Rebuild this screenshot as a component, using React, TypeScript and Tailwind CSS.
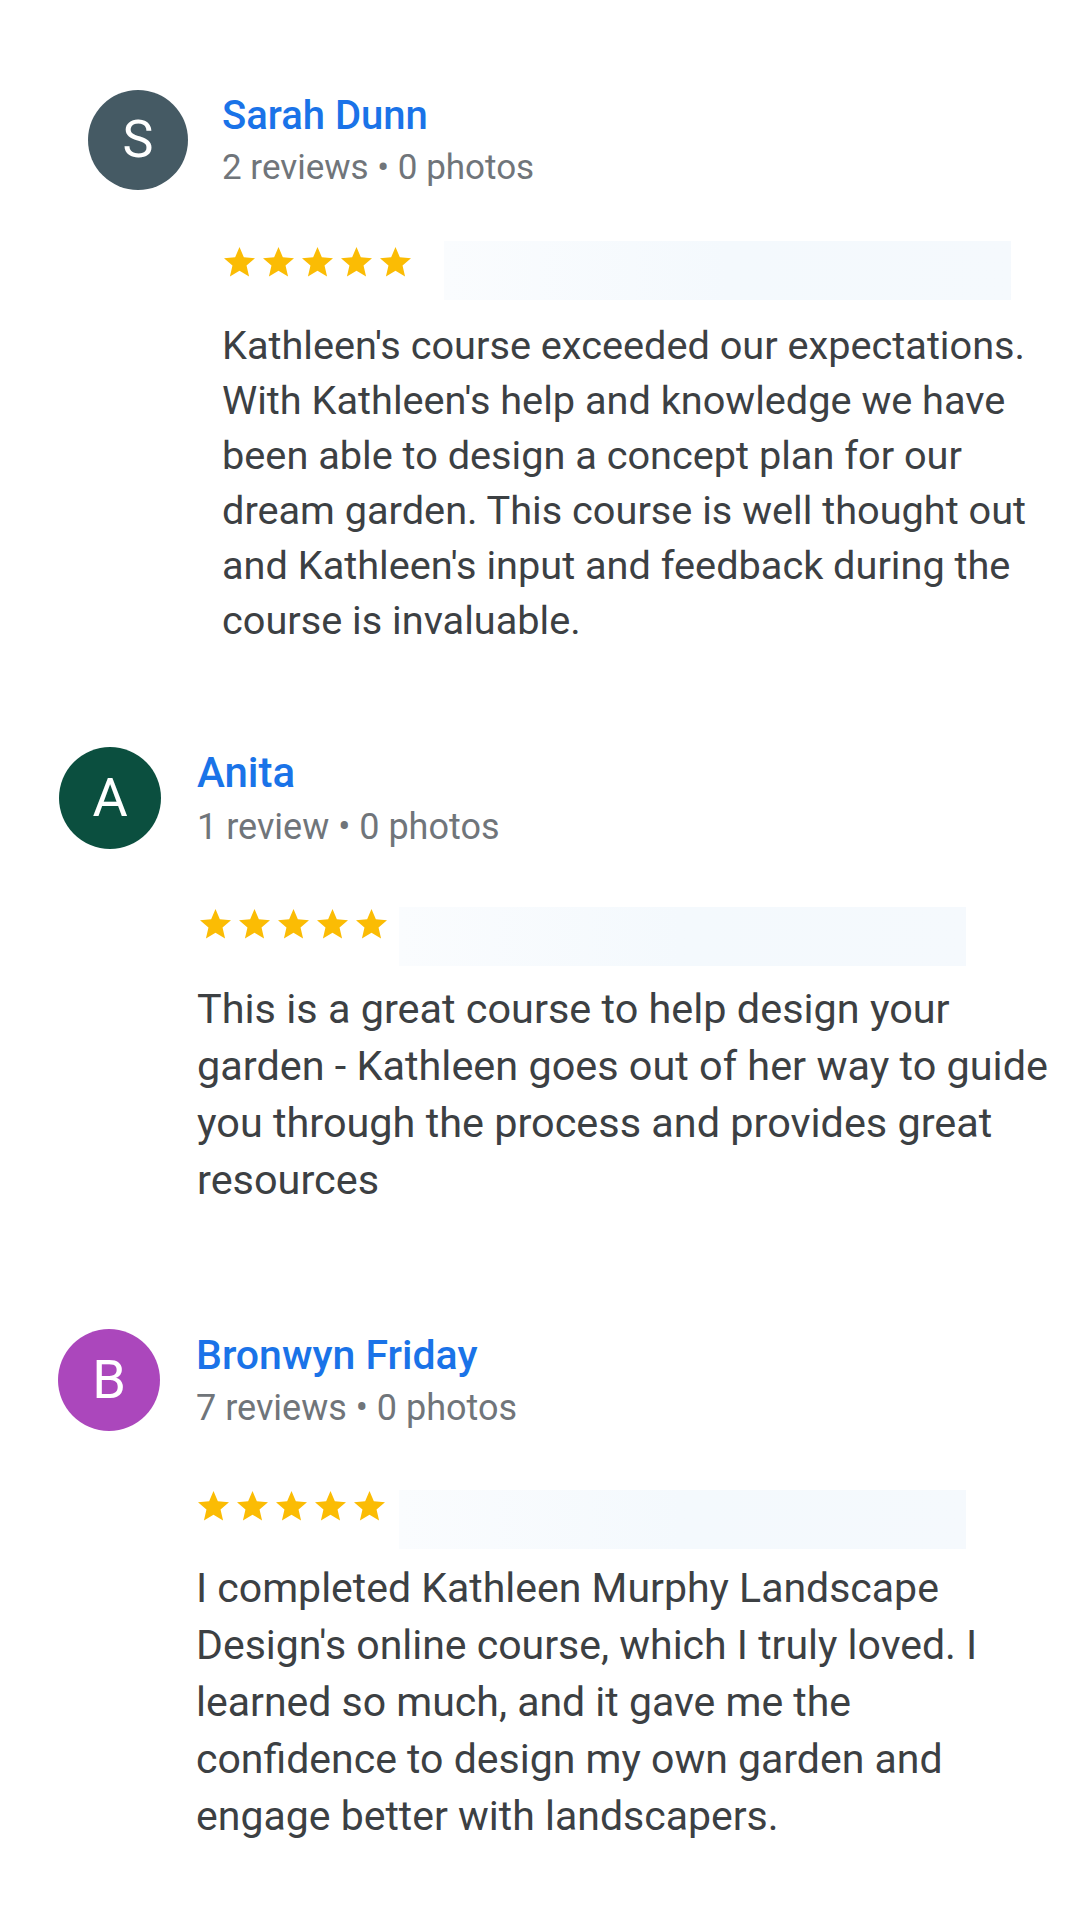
import React from "react";

function Star() {
  return (
    <svg width="31" height="29.5" viewBox="2 2 20 19" className="shrink-0">
      <path
        d="M12 17.27L18.18 21l-1.64-7.03L22 9.24l-7.19-.61L12 2 9.19 8.63 2 9.24l5.46 4.73L5.82 21z"
        fill="#fbbc04"
      />
    </svg>
  );
}

function Stars() {
  return (
    <div className="flex gap-[8px]">
      <Star />
      <Star />
      <Star />
      <Star />
      <Star />
    </div>
  );
}

function Lines({ lines }: { lines: string[] }) {
  return (
    <>
      {lines.map((l, i) => (
        <span key={i} className="block whitespace-nowrap">
          {l}
        </span>
      ))}
    </>
  );
}

export default function App() {
  return (
    <div className="w-[1080px] h-[1920px] bg-white font-['Roboto',sans-serif] overflow-hidden">
      {/* Review 1 */}
      <div className="pt-[90px] pl-[88px]">
        <div className="flex items-start gap-[34px] h-[100px]">
          <div className="w-[100px] h-[100px] shrink-0 rounded-full bg-[#455a64] flex items-center justify-center text-white text-[52px] leading-none">
            S
          </div>
          <div className="flex flex-col mt-[2px]">
            <div className="text-[40px] leading-[48px] font-medium text-[#1a73e8]">Sarah Dunn</div>
            <div className="text-[35px] leading-[56px] text-[#70757a]">2 reviews • 0 photos</div>
          </div>
        </div>
        <div className="pl-[134px]">
          <div className="mt-[51px] flex items-start h-[59px]">
            <div className="mt-[6px] ml-[2px]">
              <Stars />
            </div>
            <div className="ml-[33px] w-[567px] h-[59px] bg-gradient-to-r from-[#fafcfe] via-[#f4f9fd] to-[#f5f9fd]" />
          </div>
          <p className="mt-[18px] text-[39.7px] leading-[55px] text-[#3c4043]">
            <Lines
              lines={[
                "Kathleen's course exceeded our expectations.",
                "With Kathleen's help and knowledge we have",
                "been able to design a concept plan for our",
                "dream garden. This course is well thought out",
                "and Kathleen's input and feedback during the",
                "course is invaluable.",
              ]}
            />
          </p>
        </div>
      </div>

      {/* Review 2 */}
      <div className="pt-[99px] pl-[59px]">
        <div className="flex items-start gap-[36px] h-[102px]">
          <div className="w-[102px] h-[102px] shrink-0 rounded-full bg-[#0b4f3f] flex items-center justify-center text-white text-[54px] leading-none">
            A
          </div>
          <div className="flex flex-col">
            <div className="text-[42px] leading-[52px] font-medium text-[#1a73e8]">Anita</div>
            <div className="text-[36px] leading-[56px] text-[#70757a]">1 review • 0 photos</div>
          </div>
        </div>
        <div className="pl-[138px]">
          <div className="mt-[58px] flex items-start h-[59px]">
            <div className="mt-[2px] ml-[3px]">
              <Stars />
            </div>
            <div className="ml-[12px] w-[567px] h-[59px] bg-gradient-to-r from-[#fafcfe] via-[#f4f9fd] to-[#f5f9fd]" />
          </div>
          <p className="mt-[15px] text-[41.4px] leading-[57px] text-[#3c4043]">
            <Lines
              lines={[
                "This is a great course to help design your",
                "garden - Kathleen goes out of her way to guide",
                "you through the process and provides great",
                "resources",
              ]}
            />
          </p>
        </div>
      </div>

      {/* Review 3 */}
      <div className="pt-[120px] pl-[58px]">
        <div className="flex items-start gap-[36px] h-[102px]">
          <div className="w-[102px] h-[102px] shrink-0 rounded-full bg-[#ab47bc] flex items-center justify-center text-white text-[54px] leading-none">
            B
          </div>
          <div className="flex flex-col">
            <div className="text-[41px] leading-[52px] font-medium text-[#1a73e8]">Bronwyn Friday</div>
            <div className="text-[36px] leading-[54px] text-[#70757a]">7 reviews • 0 photos</div>
          </div>
        </div>
        <div className="pl-[138px]">
          <div className="mt-[59px] flex items-start h-[59px]">
            <div className="mt-[1px] ml-[2px]">
              <Stars />
            </div>
            <div className="ml-[14px] w-[567px] h-[59px] bg-gradient-to-r from-[#fafcfe] via-[#f4f9fd] to-[#f5f9fd]" />
          </div>
          <p className="mt-[11px] text-[41px] leading-[57px] text-[#3c4043]">
            <Lines
              lines={[
                "I completed Kathleen Murphy Landscape",
                "Design's online course, which I truly loved. I",
                "learned so much, and it gave me the",
                "confidence to design my own garden and",
                "engage better with landscapers.",
              ]}
            />
          </p>
        </div>
      </div>
    </div>
  );
}
